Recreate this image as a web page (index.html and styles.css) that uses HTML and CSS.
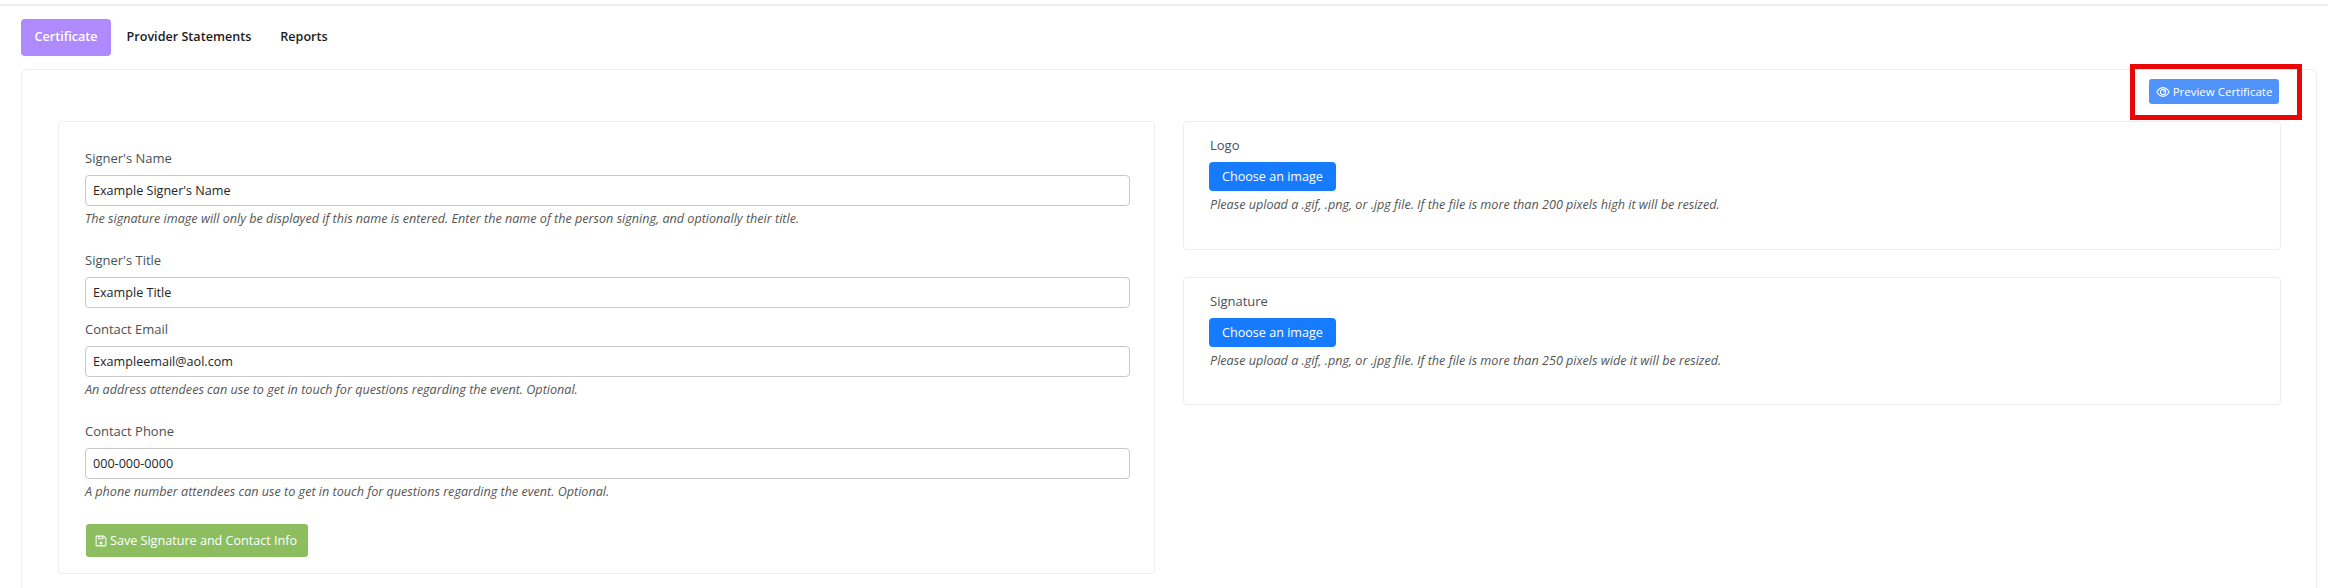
FILE: index.html
```html
<!DOCTYPE html>
<html lang="en">
<head>
<meta charset="utf-8">
<title>Certificate</title>
<link rel="stylesheet" href="styles.css">
</head>
<body>
<div class="topline"></div>
<nav class="tabs">
  <a class="tab active">Certificate</a>
  <a class="tab">Provider Statements</a>
  <a class="tab">Reports</a>
</nav>
<main class="outer">
  <div class="actions">
    <button class="btn-preview">
      <svg class="ico" viewBox="0 0 16 16" width="14" height="14" fill="none" stroke="currentColor" stroke-width="1.200"><path d="M1 8c2-3.400 4.400-5 7-5s5 1.600 7 5c-2 3.400-4.400 5-7 5s-5-1.600-7-5z"/><circle cx="8" cy="8" r="3"/><path d="M8 6.500a1.500 1.500 0 0 1 1.500 1.500"/></svg>
      Preview Certificate
    </button>
    <div class="highlight"></div>
  </div>
  <div class="columns">
    <section class="card form-card">
      <div class="field">
        <label class="lbl">Signer's Name</label>
        <input class="inp" value="Example Signer's Name">
        <p class="help">The signature image will only be displayed if this name is entered. Enter the name of the person signing, and optionally their title.</p>
      </div>
      <div class="field tight">
        <label class="lbl">Signer's Title</label>
        <input class="inp" value="Example Title">
      </div>
      <div class="field">
        <label class="lbl">Contact Email</label>
        <input class="inp" value="Exampleemail@aol.com">
        <p class="help">An address attendees can use to get in touch for questions regarding the event. Optional.</p>
      </div>
      <div class="field">
        <label class="lbl">Contact Phone</label>
        <input class="inp" value="000-000-0000">
        <p class="help">A phone number attendees can use to get in touch for questions regarding the event. Optional.</p>
      </div>
      <button class="btn-save">
        <svg class="ico" viewBox="0 0 16 16" width="12" height="12" fill="none" stroke="currentColor" stroke-width="1.400"><path d="M2.500 1.500h9l3 3v9a1 1 0 0 1-1 1h-11a1 1 0 0 1-1-1v-11a1 1 0 0 1 1-1z"/><path d="M5 1.500v3.500h5.500v-3.500"/><circle cx="8" cy="10.500" r="1.300" fill="currentColor"/></svg>
        Save Signature and Contact Info
      </button>
    </section>
    <div class="side">
      <section class="card upload-card">
        <div class="lbl">Logo</div>
        <button class="btn-choose">Choose an image</button>
        <p class="help">Please upload a .gif, .png, or .jpg file. If the file is more than 200 pixels high it will be resized.</p>
      </section>
      <section class="card upload-card">
        <div class="lbl">Signature</div>
        <button class="btn-choose">Choose an image</button>
        <p class="help">Please upload a .gif, .png, or .jpg file. If the file is more than 250 pixels wide it will be resized.</p>
      </section>
    </div>
  </div>
</main>
</body>
</html>
```
FILE: styles.css
```css
* { box-sizing: border-box; }
html, body { margin: 0; height: 588px; overflow: hidden; background: #fff; }
body { font-family: "Open Sans", "Liberation Sans", sans-serif; font-size: 13px; color: #495057; }
.topline { height: 6px; border-bottom: 2px solid #ececec; }
.tabs { display: flex; gap: 2px; padding: 13px 21px 0; height: 63px; align-items: flex-start; }
.tab { height: 37px; line-height: 35px; padding: 0 13.500px; font-size: 12.600px; font-weight: 600; color: #1c1c1c; border-radius: 4px; }
.tab.active { background: #ae8afc; color: #fff; }
.outer { margin: 0 11px 0 21px; border: 1px solid #eeeeee; border-bottom: 0; border-radius: 6px 6px 0 0; padding: 9px 35px 0 36px; height: 519px; }
.actions { display: flex; justify-content: flex-end; position: relative; height: 42px; padding-right: 2px; }
.btn-preview { height: 25px; width: 130px; background: #4f93fb; color: #fff; border: 0; border-radius: 3px; font: 500 11.500px "Open Sans", sans-serif; padding: 0; display: flex; align-items: center; justify-content: center; gap: 3px; white-space: nowrap; }
.ico { flex: none; }
.highlight { position: absolute; top: -15px; right: -21px; width: 172px; height: 56px; border: 5px solid #e80606; pointer-events: none; }
.columns { display: grid; grid-template-columns: 1097px 1098px; gap: 28px; align-items: start; }
.card { border: 1px solid #eeeeee; border-radius: 4px; background: #fff; }
.form-card { height: 453px; padding: 27.500px 24px 0 26px; }
.field { margin-bottom: 24px; }
.field.tight { margin-bottom: 13px; }
.lbl { display: block; font-size: 13px; line-height: 17px; color: #495057; font-weight: 500; }
.inp { display: block; width: 100%; height: 30.500px; margin-top: 8.500px; border: 1px solid #c8c8c8; border-radius: 4px; padding: 0 7px; font: 12.600px "Open Sans", sans-serif; color: #212529; background: #fff; }
.help { margin: 3px 0 0; font-size: 12.600px; line-height: 19px; font-style: italic; color: #555; }
.btn-save { display: flex; align-items: center; gap: 3px; margin: -0.500px 0 0 1px; height: 33px; width: 222px; padding: 0 0 0 9px; background: #8cbe5f; color: #fff; border: 0; border-radius: 3px; font: 500 12.600px "Open Sans", sans-serif; white-space: nowrap; }
.side { display: flex; flex-direction: column; gap: 27px; }
.upload-card { height: 128.500px; padding: 13px 25px 0 26px; }
.upload-card .lbl { line-height: 20px; }
.btn-choose { display: block; margin: 7px 0 0 -1px; width: 127px; height: 29px; background: #167bff; color: #fff; border: 0; border-radius: 4px; font: 12.600px "Open Sans", sans-serif; padding: 0; }
.upload-card .help { margin-top: 4px; }
```
